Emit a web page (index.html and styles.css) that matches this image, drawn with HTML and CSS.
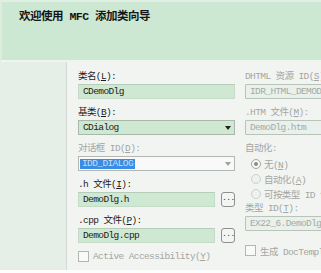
FILE: index.html
```html
<!DOCTYPE html>
<html lang="zh">
<head>
<meta charset="utf-8">
<link rel="stylesheet" href="styles.css">
</head>
<body>
<div class="wizard">
  <header class="head">
    <h1 class="title">欢迎使用 MFC 添加类向导</h1>
  </header>
  <div class="body">
    <nav class="side"></nav>
    <main class="content">
      <div class="col col-main">
        <div class="field">
          <div class="label">类名(<u>L</u>):</div>
          <div class="control input">CDemoDlg</div>
        </div>
        <div class="field">
          <div class="label">基类(<u>B</u>):</div>
          <div class="control combo"><span class="val">CDialog</span><span class="arrow"></span></div>
        </div>
        <div class="field">
          <div class="label off">对话框 ID(<u>D</u>):</div>
          <div class="control combo combo-off"><span class="sel">IDD_DIALOG</span><span class="arrow"></span></div>
        </div>
        <div class="field">
          <div class="label">.h 文件(<u>I</u>):</div>
          <div class="browse"><div class="control input">DemoDlg.h</div><span class="dots">...</span></div>
        </div>
        <div class="field">
          <div class="label">.cpp 文件(<u>P</u>):</div>
          <div class="browse"><div class="control input">DemoDlg.cpp</div><span class="dots">...</span></div>
        </div>
        <div class="check off"><span class="box"></span><span class="txt">Active Accessibility(<u>Y</u>)</span></div>
      </div>
      <div class="col col-side">
        <div class="field">
          <div class="label off">DHTML 资源 ID(<u>S</u>):</div>
          <div class="control input input-off">IDR_HTML_DEMODLG</div>
        </div>
        <div class="field">
          <div class="label off">.HTM 文件(<u>M</u>):</div>
          <div class="control input input-off">DemoDlg.htm</div>
        </div>
        <div class="label off">自动化:</div>
        <div class="radio off"><span class="dot on"></span><span class="txt">无(<u>N</u>)</span></div>
        <div class="radio off"><span class="dot"></span><span class="txt">自动化(<u>A</u>)</span></div>
        <div class="radio off"><span class="dot"></span><span class="txt">可按类型 ID 创建(<u>C</u>)</span></div>
        <div class="field">
          <div class="label off">类型 ID(<u>T</u>):</div>
          <div class="control input input-off">EX22_6.DemoDlg</div>
        </div>
        <div class="check gen off"><span class="box"></span><span class="txt">生成 DocTemplate 资源(<u>G</u>)</span></div>
      </div>
    </main>
  </div>
</div>
</body>
</html>
```
FILE: styles.css
```css
html, body {
  margin: 0;
  padding: 0;
  background: #fdfdfd;
}
body {
  width: 321px;
  height: 273px;
  overflow: hidden;
  font-family: "Liberation Mono", "Noto Sans CJK SC", monospace;
  font-size: 9.5px;
  letter-spacing: -0.6px;
  color: #1c1c1c;
}
.wizard {
  width: 321px;
  height: 270px;
  display: flex;
  flex-direction: column;
  overflow: hidden;
}
.head {
  height: 62px;
  flex: none;
  box-sizing: border-box;
  background: #cde8d2;
  border-top: 2px solid #e0efe3;
  border-left: 2px solid #dcede0;
  border-bottom: 2px solid #eef5ef;
  padding: 8px 0 0 17px;
}
.title {
  margin: 0;
  font-size: 11.5px;
  line-height: 14px;
  font-weight: bold;
  letter-spacing: -0.5px;
  color: #151515;
  white-space: nowrap;
}
.body {
  flex: 1;
  display: flex;
  min-height: 0;
}
.side {
  width: 66px;
  flex: none;
  background: #e6eee8;
  border-right: 1px solid #d3dad4;
  box-shadow: 1px 0 0 #fbfcfb;
}
.content {
  flex: 1;
  display: flex;
  gap: 10px;
  background: #f2f4f2;
  padding: 7px 0 0 11px;
  min-width: 0;
}
.col-main {
  width: 157px;
  flex: none;
}
.col-side {
  width: 160px;
  flex: none;
  white-space: nowrap;
}
.field {
  margin-bottom: 6px;
}
.label {
  height: 15px;
  line-height: 15px;
  white-space: nowrap;
}
.off {
  color: #a2a6a2;
}
u {
  text-decoration-thickness: 1px;
  text-underline-offset: 1px;
}
.control {
  height: 15px;
  box-sizing: border-box;
  line-height: 13px;
  padding-left: 4px;
  white-space: nowrap;
  overflow: hidden;
}
.input {
  background: #cfe8d2;
  border: 1px solid #c4dcc7;
  border-top-color: #b6ceb9;
  color: #1a1a1a;
}
.input-off {
  background: #eaf0eb;
  border: 1px solid #b8c4ba;
  color: #a3aba4;
  border-radius: 1px;
}
.combo {
  display: flex;
  align-items: center;
  justify-content: space-between;
  background: #cfe8d2;
  border: 1px solid #aab8ac;
  padding-right: 3px;
}
.combo .arrow {
  width: 0;
  height: 0;
  border-left: 3.5px solid transparent;
  border-right: 3.5px solid transparent;
  border-top: 4px solid #202020;
}
.combo-off {
  background: #f8f9f8;
  border-color: #b4b8b4;
  padding-left: 1px;
}
.combo-off .arrow {
  border-top-color: #a0a0a0;
}
.sel {
  background: #3a8de4;
  color: #c8def5;
  padding: 0 2px;
  line-height: 10px;
}
.browse {
  display: flex;
  gap: 6px;
  align-items: center;
}
.browse .input {
  flex: 1;
}
.dots {
  width: 14px;
  height: 15px;
  box-sizing: border-box;
  flex: none;
  border: 1px solid #8d918d;
  border-radius: 3px;
  background: #f3f4f3;
  font-size: 8px;
  line-height: 10px;
  text-align: center;
  letter-spacing: -0.5px;
  color: #333;
}
.check {
  height: 15px;
  display: flex;
  align-items: center;
  gap: 4px;
  white-space: nowrap;
}
.check .box {
  width: 11px;
  height: 11px;
  box-sizing: border-box;
  border: 1px solid #b4b6b4;
  background: #f8f9f8;
  flex: none;
}
.gen {
  margin-top: 12px;
}
.radio {
  height: 15px;
  display: flex;
  align-items: center;
  gap: 3px;
  padding-left: 6px;
  white-space: nowrap;
}
.dot {
  width: 10px;
  height: 10px;
  box-sizing: border-box;
  border-radius: 50%;
  border: 1px solid #cdd2cd;
  background: #eef1ee;
  flex: none;
  display: flex;
  align-items: center;
  justify-content: center;
}
.dot.on {
  border-color: #a4a8a4;
  background: #f5f6f5;
}
.dot.on::after {
  content: "";
  width: 4px;
  height: 4px;
  border-radius: 50%;
  background: #8a8e8a;
}
```
